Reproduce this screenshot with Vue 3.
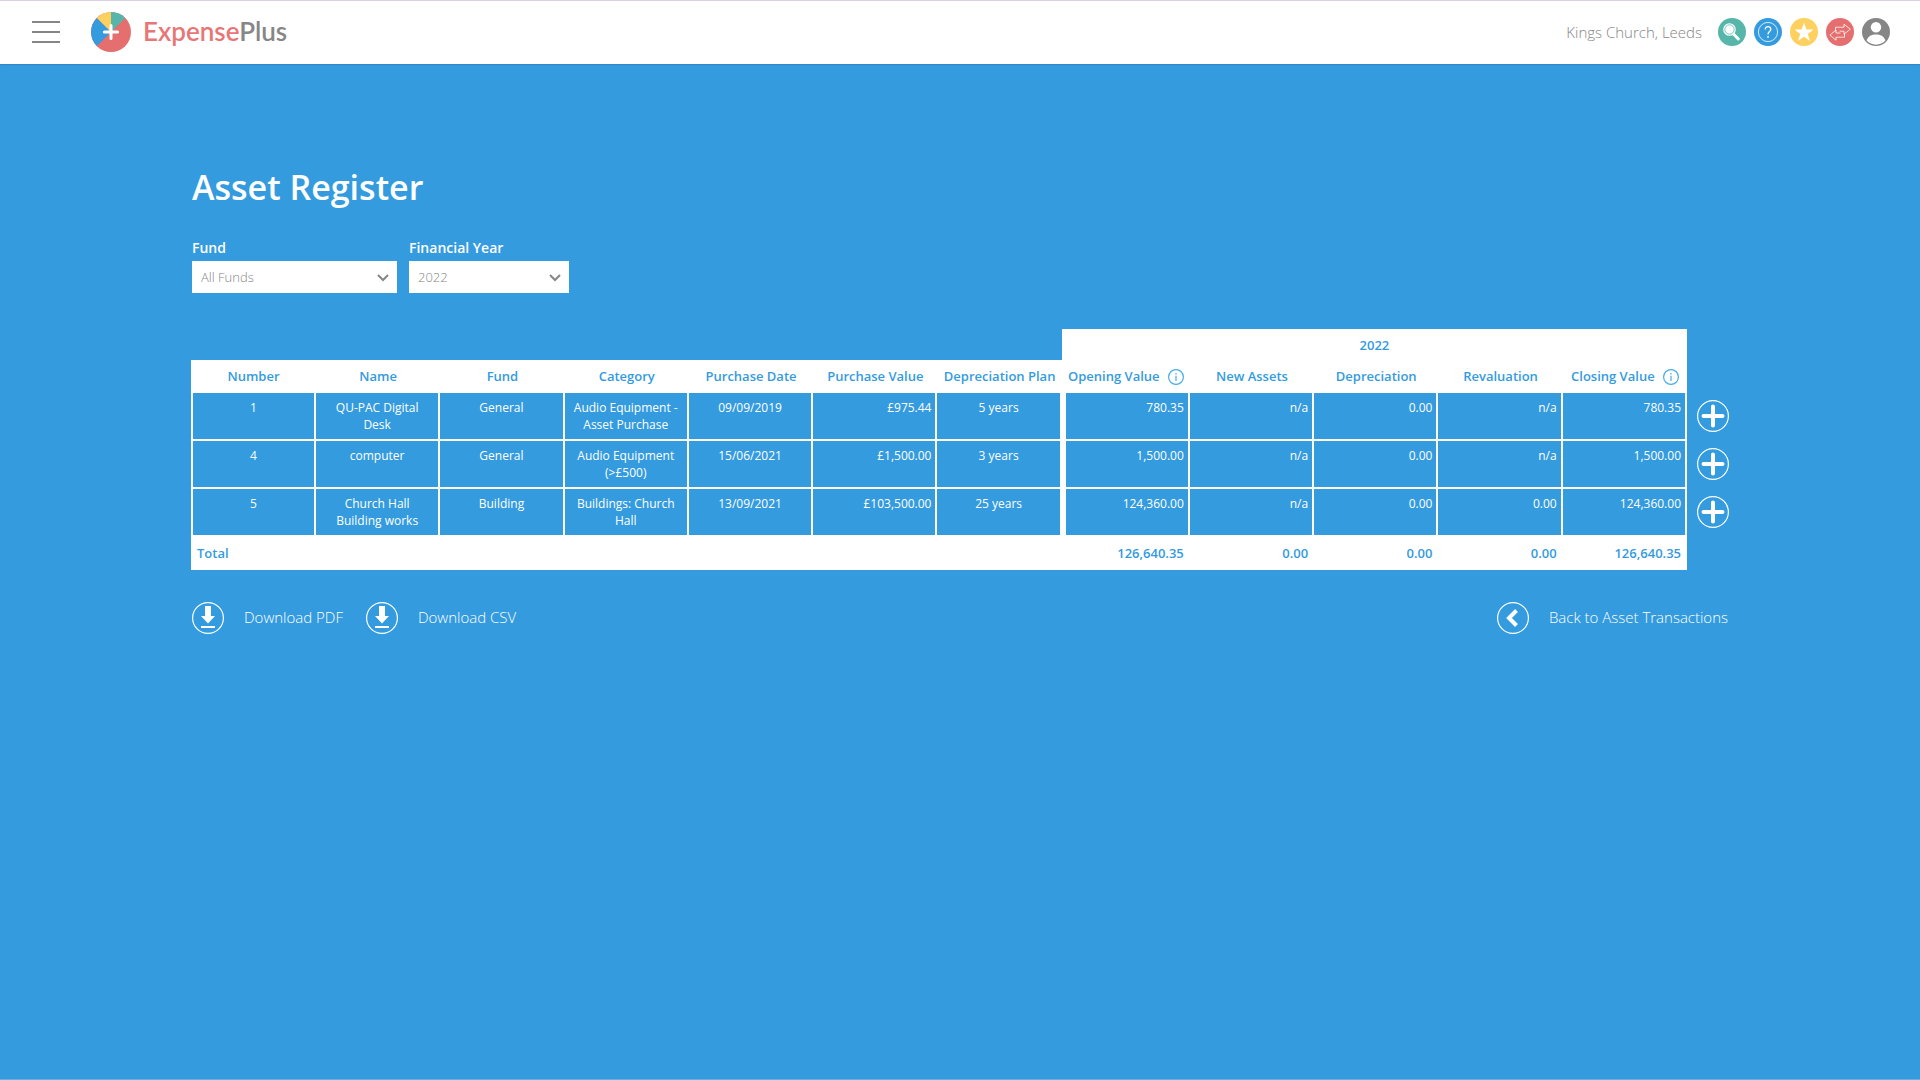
<template>
	<div class="page">
		<header class="topbar">
			<button class="menu-toggle" type="button" aria-label="Menu">
				<span></span>
				<span></span>
				<span></span>
			</button>
			<a class="brand" href="#">
				<svg class="brand-mark" viewBox="0 0 40 40">
					<circle cx="20" cy="20" r="20" fill="#e56e6f" />
					<path d="M20 20L5.9 34.1A20 20 0 0 1 5.9 5.9Z" fill="#349bdf" />
					<path d="M20 20L5.9 5.9A20 20 0 0 1 20 0Z" fill="#fdd05f" />
					<path d="M20 20V0A20 20 0 0 1 34.1 5.9Z" fill="#55b6a9" />
					<path d="M20 13.4V26.6M13.4 20H26.6" stroke="#fff" stroke-width="3" stroke-linecap="round" />
				</svg>
				<span class="brand-name">Expense<span class="brand-plus">Plus</span></span>
			</a>
			<nav class="tools">
				<span class="organisation">Kings Church, Leeds</span>
				<a class="tool" href="#" aria-label="Search">
					<svg viewBox="0 0 28 28">
						<circle cx="14" cy="14" r="14" fill="#55b6a9" />
						<path d="M15 15.5L20.3 21" stroke="#fff" stroke-width="3" stroke-linecap="round" />
						<circle cx="11.5" cy="11.5" r="5" fill="#fff" stroke="#fff" stroke-width="2.6" />
						<circle cx="11.5" cy="11.5" r="4.7" fill="none" stroke="#55b6a9" stroke-width="0.8" />
					</svg>
				</a>
				<a class="tool" href="#" aria-label="Help">
					<svg viewBox="0 0 28 28">
						<circle cx="14" cy="14" r="14" fill="#349bdf" />
						<circle cx="14" cy="14" r="9.6" fill="none" stroke="#fff" stroke-width="0.8" />
						<path d="M11.2 11.5C11.2 7.6 17 7.8 16.8 11.4C16.7 13.6 14 13.6 14 16.4" fill="none" stroke="#fff" stroke-width="1.3" />
						<circle cx="14" cy="18.9" r="0.9" fill="#fff" />
					</svg>
				</a>
				<a class="tool" href="#" aria-label="Favourites">
					<svg viewBox="0 0 28 28">
						<circle cx="14" cy="14" r="14" fill="#fdd05f" />
						<path d="M14 4.6L16.4 11.4L23.6 11.6L17.8 16L19.9 23L14 18.8L8.1 23L10.2 16L4.4 11.6L11.6 11.4Z" fill="#fff" />
					</svg>
				</a>
				<a class="tool" href="#" aria-label="Switch organisation">
					<svg viewBox="0 0 28 28">
						<circle cx="14" cy="14" r="14" fill="#e56e6f" />
						<g fill="none" stroke="#fff" stroke-width="0.8" stroke-linejoin="round">
							<path d="M9.5 13.2V9.2H18V6.2L24.3 11.2L18 16.2V13.2H13.5" />
							<path d="M18.5 15V19.2H10V22.2L3.9 17.1L10 12V15H14.5" />
						</g>
					</svg>
				</a>
				<a class="tool" href="#" aria-label="Account">
					<svg viewBox="0 0 28 28">
						<circle cx="14" cy="14" r="14" fill="#868686" />
						<circle cx="14" cy="9.2" r="5.2" fill="#fff" />
						<path d="M4.6 22.6C6 18.2 9.5 16.6 14 16.6S22 18.2 23.4 22.6A12.8 12.8 0 0 1 4.6 22.6Z" fill="#fff" />
					</svg>
				</a>
			</nav>
		</header>

		<main class="content">
			<h1>Asset Register</h1>

			<form class="filters">
				<div class="field field-fund">
					<label for="fund">Fund</label>
					<div class="select">
						<select id="fund" v-model="fund">
							<option>All Funds</option>
							<option>General</option>
							<option>Building</option>
						</select>
						<svg class="chevron" viewBox="0 0 12 8">
							<path d="M1 1L6 6L11 1" />
						</svg>
					</div>
				</div>
				<div class="field field-year">
					<label for="year">Financial Year</label>
					<div class="select">
						<select id="year" v-model="year">
							<option>2022</option>
							<option>2021</option>
						</select>
						<svg class="chevron" viewBox="0 0 12 8">
							<path d="M1 1L6 6L11 1" />
						</svg>
					</div>
				</div>
			</form>

			<table class="register">
				<colgroup>
					<col class="col-number">
					<col span="6">
					<col class="col-opening">
					<col span="4">
					<col class="col-action">
				</colgroup>
				<thead>
					<tr class="year-row">
						<td colspan="7"></td>
						<th colspan="5" scope="colgroup">{{ year }}</th>
						<td></td>
					</tr>
					<tr class="head-row">
						<th v-for="column in columns" :key="column.key" scope="col">
							<span class="heading">
								{{ column.label }}
								<svg v-if="column.info" class="info" viewBox="0 0 16 16">
									<circle cx="8" cy="8" r="7.4" />
									<path d="M8 6.8V12M8 4V5.5" />
								</svg>
							</span>
						</th>
						<td></td>
					</tr>
				</thead>
				<tbody>
					<tr v-for="asset in assets" :key="asset.number">
						<td
							v-for="column in columns"
							:key="column.key"
							:class="{ amount: column.amount, 'year-start': column.key === 'opening' }"
						>{{ asset[column.key] }}</td>
						<td class="action">
							<button class="round" type="button" :aria-label="`Add to ${ asset.name }`">
								<svg viewBox="0 0 32 32">
									<circle cx="16" cy="16" r="15.4" />
									<path d="M16 6.5V25.5M6.5 16H25.5" stroke-width="4" stroke-linecap="round" />
								</svg>
							</button>
						</td>
					</tr>
				</tbody>
				<tfoot>
					<tr class="total-row">
						<th class="total" colspan="7" scope="row">Total</th>
						<td v-for="(total, index) in totals" :key="index" class="amount">{{ total }}</td>
						<td></td>
					</tr>
				</tfoot>
			</table>

			<div class="links">
				<a v-for="type in ['PDF', 'CSV']" :key="type" class="link" href="#">
					<svg viewBox="0 0 32 32">
						<circle cx="16" cy="16" r="15.4" />
						<path class="solid" d="M13 4H19V14H23L16 21.5L9 14H13Z" />
						<path d="M9 25H23" stroke-width="2" />
					</svg>
					<span>Download {{ type }}</span>
				</a>
				<a class="link link-back" href="#">
					<svg viewBox="0 0 32 32">
						<circle cx="16" cy="16" r="15.4" />
						<path d="M19.5 8.5L12 16L19.5 23.5" stroke-width="4" />
					</svg>
					<span>Back to Asset Transactions</span>
				</a>
			</div>
		</main>
	</div>
</template>

<script setup>
import { ref } from 'vue'

const fund = ref('All Funds')
const year = ref('2022')

const columns = [
	{ key: 'number', label: 'Number' },
	{ key: 'name', label: 'Name' },
	{ key: 'fund', label: 'Fund' },
	{ key: 'category', label: 'Category' },
	{ key: 'date', label: 'Purchase Date' },
	{ key: 'value', label: 'Purchase Value', amount: true },
	{ key: 'plan', label: 'Depreciation Plan' },
	{ key: 'opening', label: 'Opening Value', amount: true, info: true },
	{ key: 'additions', label: 'New Assets', amount: true },
	{ key: 'depreciation', label: 'Depreciation', amount: true },
	{ key: 'revaluation', label: 'Revaluation', amount: true },
	{ key: 'closing', label: 'Closing Value', amount: true, info: true },
]

const assets = [
	{
		number: 1,
		name: 'QU-PAC Digital Desk',
		fund: 'General',
		category: 'Audio Equipment - Asset Purchase',
		date: '09/09/2019',
		value: '£975.44',
		plan: '5 years',
		opening: '780.35',
		additions: 'n/a',
		depreciation: '0.00',
		revaluation: 'n/a',
		closing: '780.35',
	},
	{
		number: 4,
		name: 'computer',
		fund: 'General',
		category: 'Audio Equipment (>£500)',
		date: '15/06/2021',
		value: '£1,500.00',
		plan: '3 years',
		opening: '1,500.00',
		additions: 'n/a',
		depreciation: '0.00',
		revaluation: 'n/a',
		closing: '1,500.00',
	},
	{
		number: 5,
		name: 'Church Hall Building works',
		fund: 'Building',
		category: 'Buildings: Church Hall',
		date: '13/09/2021',
		value: '£103,500.00',
		plan: '25 years',
		opening: '124,360.00',
		additions: 'n/a',
		depreciation: '0.00',
		revaluation: '0.00',
		closing: '124,360.00',
	},
]

const totals = ['126,640.35', '0.00', '0.00', '0.00', '126,640.35']
</script>

<style>
body {
	background: #349bdf;
}
</style>

<style scoped>
.page {
	--blue: #349bdf;
	box-sizing: border-box;
	min-height: 100vh;
	background: var(--blue);
	border-bottom: 1px solid #64b1e6;
	color: #fff;
	font-family: 'Open Sans', 'Noto Sans', sans-serif;
	font-size: 12px;
	line-height: 17px;
}

.topbar {
	display: flex;
	align-items: center;
	height: 64px;
	padding: 0 30px 0 32px;
	background: #fff;
	box-shadow: inset 0 1px #d9d0ea, 0 0 2px rgba(0, 0, 0, 0.3);
}

.menu-toggle {
	display: flex;
	flex-direction: column;
	gap: 8px;
	width: 28px;
	margin-right: 31px;
	padding: 0;
	border: 0;
	background: none;
}

.menu-toggle span {
	height: 2px;
	background: #868686;
}

.brand {
	display: flex;
	align-items: center;
	gap: 12px;
	text-decoration: none;
}

.brand-mark {
	width: 40px;
	height: 40px;
}

.brand-name {
	padding-bottom: 2px;
	color: #e97677;
	font-family: Lato, sans-serif;
	font-size: 26px;
	font-weight: 600;
	line-height: 32px;
}

.brand-plus {
	color: #868686;
}

.tools {
	display: flex;
	align-items: center;
	gap: 8px;
	margin-left: auto;
}

.organisation {
	margin-right: 8px;
	color: #868686;
	font-size: 15px;
	font-weight: 300;
}

.tool,
.tool svg {
	display: block;
	width: 28px;
	height: 28px;
}

.content {
	width: 80%;
	margin: 0 auto;
	padding: 101px 0 40px;
}

h1 {
	margin: 0;
	font-size: 34px;
	font-weight: 600;
	line-height: 44px;
}

.filters {
	display: flex;
	gap: 12px;
	margin: 29px 0 36px;
}

.field label {
	display: block;
	margin-bottom: 3px;
	font-size: 14px;
	font-weight: 600;
	line-height: 20px;
}

.field-fund {
	width: 205px;
}

.field-year {
	width: 160px;
}

.select {
	position: relative;
}

.select select {
	display: block;
	width: 100%;
	height: 32px;
	padding: 0 9px;
	border: 0;
	border-radius: 0;
	appearance: none;
	background: #fff;
	color: #868686;
	font-family: inherit;
	font-size: 13px;
	font-weight: 300;
}

.chevron {
	position: absolute;
	top: 13px;
	right: 8px;
	width: 12px;
	height: 8px;
	fill: none;
	stroke: #868686;
	stroke-width: 2;
	pointer-events: none;
}

.register {
	width: calc(100% + 2px);
	margin-left: -1px;
	border-spacing: 0;
	table-layout: fixed;
}

.col-number {
	width: 125px;
}

.col-opening {
	width: 128px;
}

.col-action {
	width: 42px;
}

.register th,
.register td {
	box-sizing: border-box;
	padding: 0;
}

.register th {
	background: #fff;
	color: var(--blue);
	font-size: 13px;
	font-weight: 600;
}

.register .year-row th {
	height: 31px;
	padding-top: 2px;
}

.head-row th {
	height: 33px;
}

.heading {
	display: flex;
	align-items: center;
	justify-content: center;
	gap: 8px;
	white-space: nowrap;
}

.info {
	width: 16px;
	height: 16px;
	fill: none;
	stroke: #44ade4;
	stroke-width: 1.2;
}

.register tbody td {
	height: 48px;
	padding: 6px 8px;
	border: solid #fff;
	border-width: 0 2px 2px 0;
	text-align: center;
	vertical-align: top;
}

.register tbody td:first-child {
	border-left-width: 2px;
}

.register tbody .year-start {
	border-left-width: 4px;
}

.register tbody .amount {
	padding-right: 4px;
	text-align: right;
}

.register tbody .action {
	padding: 7px 0 7px 10px;
	border-width: 0;
}

.round {
	display: block;
	width: 32px;
	height: 32px;
	padding: 0;
	border: 0;
	background: none;
}

.round svg,
.link svg {
	display: block;
	width: 32px;
	height: 32px;
	fill: none;
	stroke: #fff;
	stroke-width: 1.2;
}

.register .total {
	height: 33px;
	padding-left: 6px;
	text-align: left;
}

.total-row .amount {
	padding-right: 6px;
	background: #fff;
	color: var(--blue);
	font-size: 13px;
	font-weight: 600;
	text-align: right;
}

.links {
	display: flex;
	gap: 23px;
	margin-top: 32px;
}

.link {
	display: flex;
	align-items: center;
	gap: 20px;
	color: #fff;
	font-size: 15px;
	font-weight: 300;
	line-height: 20px;
	text-decoration: none;
}

.link span {
	padding-bottom: 2px;
}

.link .solid {
	fill: #fff;
	stroke: none;
}

.link-back {
	margin-left: auto;
}
</style>
